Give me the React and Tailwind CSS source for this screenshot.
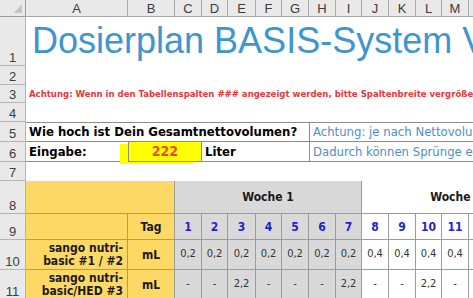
import React from "react";

const cols = ["A", "B", "C", "D", "E", "F", "G", "H", "I", "J", "K", "L", "M", "N", "O", "P"];

const sans = "font-['DejaVu_Sans_Condensed','DejaVu_Sans',sans-serif]";

function RowHead({ n }) {
  return (
    <div className="flex items-end justify-center border-r border-b border-[#b4b4b4] bg-[#e9e9e9] pb-[1px] text-[13px] leading-none text-[#3c3c3c] font-['Liberation_Sans',sans-serif]">
      {n}
    </div>
  );
}

const week1 = ["0,2", "0,2", "0,2", "0,2", "0,2", "0,2", "0,2"];
const week2 = ["0,4", "0,4", "0,4", "0,4", "0,4", "0,4", "0,4"];
const hed1 = ["-", "-", "2,2", "-", "-", "-", "2,2"];
const hed2 = ["-", "-", "2,2", "-", "-", "2,2", "-"];

function Cell({ children, gray, last }) {
  return (
    <div
      className={`flex items-center justify-center border-b border-[#9c9c9c] text-[11px] text-[#333] ${last ? "" : "border-r"} ${gray ? "bg-[#d9d9d9]" : "bg-white"}`}
    >
      {children}
    </div>
  );
}

function ProductRow({ n, label1, label2, w1, w2 }) {
  return (
    <>
      <RowHead n={n} />
      <div className="flex flex-col items-end justify-center whitespace-nowrap border-r border-b border-[#9c9c9c] bg-[#ffd966] pr-[4px] text-[12px] font-bold leading-[13px] text-[#1a1a1a]">
        <span>{label1}</span>
        <span>{label2}</span>
      </div>
      <div className="flex items-center justify-center border-r border-b border-[#9c9c9c] bg-[#ffd966] text-[12px] font-bold text-[#1a1a1a]">
        mL
      </div>
      {w1.map((v, i) => (
        <Cell key={"a" + i} gray>{v}</Cell>
      ))}
      {w2.map((v, i) => (
        <Cell key={"b" + i} last={i === 6}>{v}</Cell>
      ))}
    </>
  );
}

export default function App() {
  return (
    <div className="h-[298px] w-[473px] overflow-hidden bg-white">
      <div
        className={`grid w-[689px] grid-cols-[26px_102px_47px_27px_26px_28px_26px_27px_27px_26px_27px_27px_26px_27px_27px_27px_27px] grid-rows-[17px_49px_19px_18px_19px_20px_20px_19px_33px_26px_30px_30px] ${sans}`}
      >
        {/* column headers */}
        <div className="relative border-r border-b border-[#9c9c9c] bg-[#e9e9e9]">
          <svg className="absolute left-[14px] top-[4px]" width="9" height="10" viewBox="0 0 9 10">
            <polygon points="8,0 8,9 0,9" fill="#c4c4c4" />
          </svg>
        </div>
        {cols.map((c) => (
          <div
            key={c}
            className="flex items-center justify-center border-r border-b border-[#a8a8a8] bg-[#e9e9e9] text-[13px] leading-none text-[#3c3c3c] font-['Liberation_Sans',sans-serif]"
          >
            {c}
          </div>
        ))}

        {/* 1 */}
        <RowHead n="1" />
        <div className="col-span-16 whitespace-nowrap pl-[6px] pt-[6px] text-[36px] leading-none text-[#3f95cf] font-['Liberation_Sans',sans-serif]">
          Dosierplan BASIS-System Version 2
        </div>

        {/* 2 */}
        <RowHead n="2" />
        <div className="col-span-16" />

        {/* 3 */}
        <RowHead n="3" />
        <div className="col-span-16 flex items-center whitespace-nowrap pl-[3px] text-[9.5px] font-bold text-[#e8363c]">
          Achtung: Wenn in den Tabellenspalten ### angezeigt werden, bitte Spaltenbreite vergrößern
        </div>

        {/* 4 */}
        <RowHead n="4" />
        <div className="col-span-16" />

        {/* 5 */}
        <RowHead n="5" />
        <div className="col-span-7 flex items-center whitespace-nowrap border-t border-b border-[#8c8c8c] pl-[3px] text-[13px] font-bold text-black">
          Wie hoch ist Dein Gesamtnettovolumen?
        </div>
        <div className="col-span-9 flex items-center whitespace-nowrap border-t border-b border-l border-[#8c8c8c] pl-[3px] text-[13px] text-[#4d8fc7]">
          Achtung: je nach Nettovolumen werden die Mengen gerundet.
        </div>

        {/* 6 */}
        <RowHead n="6" />
        <div className="flex items-center whitespace-nowrap border-b border-[#8c8c8c] pl-[3px] text-[13px] font-bold text-black">
          Eingabe:
        </div>
        <div className="col-span-2 flex items-center justify-center border-l border-r border-b border-[#8c8c8c] bg-[#ffff00] shadow-[-8px_2px_0_0_#ffff00] text-[14px] font-bold text-[#ee4a28]">
          222
        </div>
        <div className="col-span-4 flex items-center whitespace-nowrap border-b border-[#8c8c8c] pl-[3px] text-[13px] font-bold text-black">
          Liter
        </div>
        <div className="col-span-9 flex items-center whitespace-nowrap border-b border-l border-[#8c8c8c] pl-[3px] text-[13px] text-[#4d8fc7]">
          Dadurch können Sprünge entstehen.
        </div>

        {/* 7 */}
        <RowHead n="7" />
        <div className="col-span-16" />

        {/* 8 */}
        <RowHead n="8" />
        <div className="col-span-2 border-r border-b border-[#9c9c9c] bg-[#ffd966]" />
        <div className="col-span-7 flex items-center justify-center border-r border-b border-[#9c9c9c] bg-[#d9d9d9] text-[12px] font-bold text-[#1a1a1a]">
          Woche 1
        </div>
        <div className="col-span-7 flex items-center justify-center border-b border-[#9c9c9c] text-[12px] font-bold text-[#1a1a1a]">
          Woche 2
        </div>

        {/* 9 */}
        <RowHead n="9" />
        <div className="border-r border-b border-[#9c9c9c] bg-[#ffd966]" />
        <div className="flex items-center justify-center border-r border-b border-[#9c9c9c] bg-[#ffd966] text-[12px] font-bold text-[#1a1a1a]">
          Tag
        </div>
        {[1, 2, 3, 4, 5, 6, 7, 8, 9, 10, 11, 12, 13, 14].map((d) => (
          <div
            key={d}
            className={`flex items-center justify-center border-r border-b border-[#9c9c9c] text-[12px] font-bold text-[#1f1fd6] ${d <= 7 ? "bg-[#d9d9d9]" : "bg-white"}`}
          >
            {d}
          </div>
        ))}

        {/* 10, 11 */}
        <ProductRow n="10" label1="sango nutri-" label2="basic #1 / #2" w1={week1} w2={week2} />
        <ProductRow n="11" label1="sango nutri-" label2="basic/HED #3" w1={hed1} w2={hed2} />
      </div>
    </div>
  );
}
